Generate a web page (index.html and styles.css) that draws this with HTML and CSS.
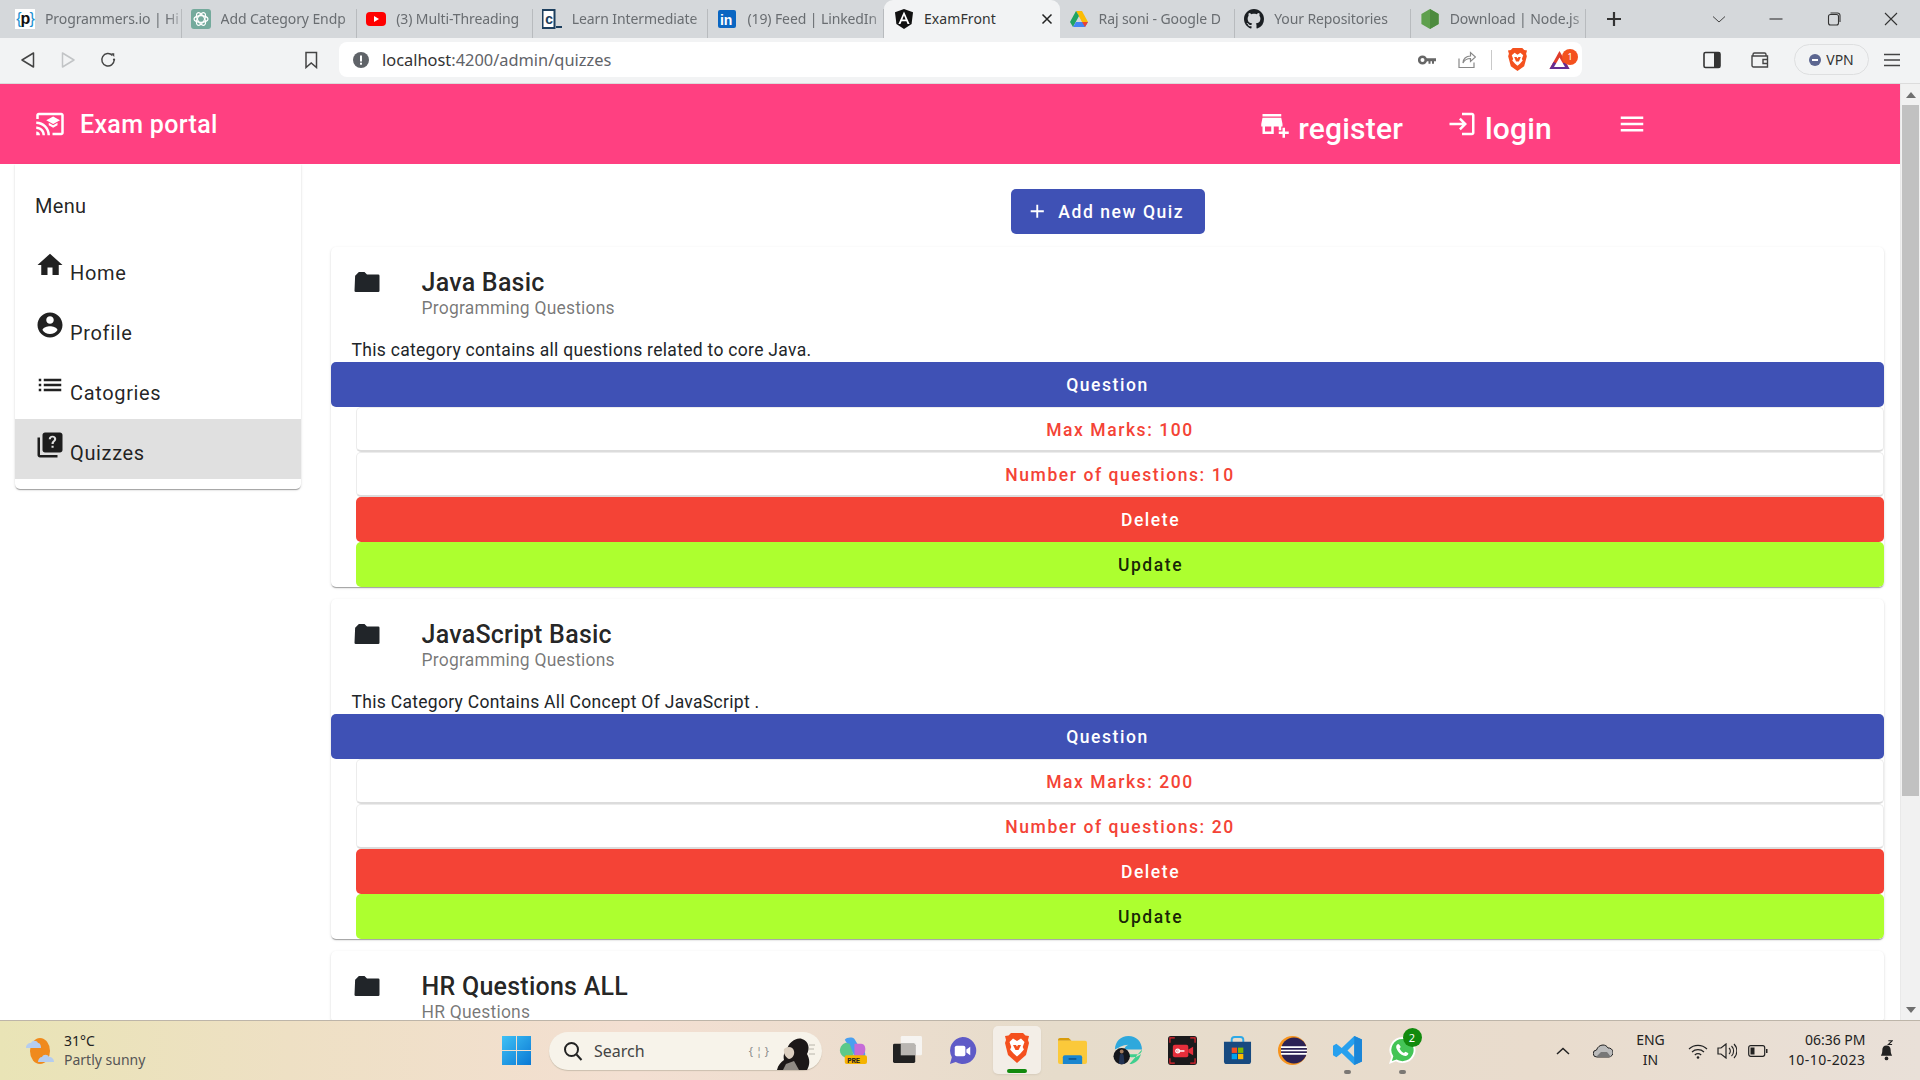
FILE: index.html
```html
<!DOCTYPE html>
<html lang="en">
<head>
<meta charset="utf-8">
<title>ExamFront</title>
<link rel="stylesheet" href="styles.css">
</head>
<body>
<div class="screen">
  <div class="tabstrip">
    <div class="tab"><span class="fav fav-p">{<b>p</b>}</span><span class="tab-title">Programmers.io | Hi</span></div>
    <div class="tab"><svg class="fav" viewBox="0 0 20 20"><rect width="20" height="20" rx="3" fill="#74aa9c"/><g fill="none" stroke="#fff" stroke-width="1.2"><ellipse cx="10" cy="10" rx="7" ry="3.4"/><ellipse cx="10" cy="10" rx="7" ry="3.4" transform="rotate(60 10 10)"/><ellipse cx="10" cy="10" rx="7" ry="3.4" transform="rotate(120 10 10)"/></g></svg><span class="tab-title">Add Category Endp</span></div>
    <div class="tab"><svg class="fav" viewBox="0 0 20 20"><rect y="3" width="20" height="14" rx="4" fill="#f00"/><path d="M8 7l5 3-5 3z" fill="#fff"/></svg><span class="tab-title">(3) Multi-Threading</span></div>
    <div class="tab"><svg class="fav" viewBox="0 0 20 20"><rect x="0.5" y="1" width="12" height="18" fill="#fff" stroke="#1d3f5e" stroke-width="2"/><text x="3" y="15" class="fav-c">c</text><rect x="14" y="17" width="6" height="2" fill="#1d3f5e"/></svg><span class="tab-title">Learn Intermediate</span></div>
    <div class="tab"><svg class="fav" viewBox="0 0 20 20"><rect width="18" height="18" y="1" x="1" rx="2" fill="#0a66c2"/><text x="3" y="15.5" class="fav-in">in</text></svg><span class="tab-title">(19) Feed | LinkedIn</span></div>
    <div class="tab tab-active"><svg class="fav" viewBox="0 0 20 20"><path d="M10 0L1 3.2l1.4 11.9L10 20l7.6-4.9L19 3.2z" fill="#111"/><path d="M10 2.5L4.4 15h2.1l1.1-2.8h4.8l1.1 2.8h2.1zm-1.6 8L10 6.6l1.6 3.9z" fill="#fff"/></svg><span class="tab-title">ExamFront</span><svg class="tab-close" viewBox="0 0 12 12"><path d="M1.5 1.5l9 9m0-9l-9 9" stroke="#222" stroke-width="1.5"/></svg></div>
    <div class="tab"><svg class="fav" viewBox="0 0 20 20"><path d="M7 2h6l6 11h-6z" fill="#fbbc04"/><path d="M7 2L1 13l3 5 6-11z" fill="#1fa463"/><path d="M4 18h12l3-5H7z" fill="#4285f4"/><path d="M13 13h6l-3 5z" fill="#ea4335"/></svg><span class="tab-title">Raj soni - Google D</span></div>
    <div class="tab"><svg class="fav" viewBox="0 0 16 16"><path fill="#1b1f23" d="M8 0C3.58 0 0 3.58 0 8c0 3.54 2.29 6.53 5.47 7.59.4.07.55-.17.55-.38 0-.19-.01-.82-.01-1.49-2.01.37-2.53-.49-2.69-.94-.09-.23-.48-.94-.82-1.13-.28-.15-.68-.52-.01-.53.63-.01 1.08.58 1.23.82.72 1.21 1.87.87 2.33.66.07-.52.28-.87.51-1.07-1.78-.2-3.64-.89-3.64-3.95 0-.87.31-1.59.82-2.15-.08-.2-.36-1.02.08-2.12 0 0 .67-.21 2.2.82.64-.18 1.32-.27 2-.27s1.36.09 2 .27c1.53-1.04 2.2-.82 2.2-.82.44 1.1.16 1.92.08 2.12.51.56.82 1.27.82 2.15 0 3.07-1.87 3.75-3.65 3.95.29.25.54.73.54 1.48 0 1.07-.01 1.93-.01 2.2 0 .21.15.46.55.38A8.01 8.01 0 0016 8c0-4.42-3.58-8-8-8z"/></svg><span class="tab-title">Your Repositories</span></div>
    <div class="tab tab-last"><svg class="fav" viewBox="0 0 20 20"><path d="M10 0l8.6 5v10L10 20l-8.6-5V5z" fill="#5fa04e"/><path d="M10 0l8.6 5v10L10 20z" fill="#4d8b3f"/></svg><span class="tab-title">Download | Node.js</span></div>
    <div class="strip-new"><svg class="ico-16" viewBox="0 0 16 16"><path d="M8 1v14M1 8h14" stroke="#333" stroke-width="2.2"/></svg></div>
    <div class="wincontrols">
      <svg class="win-btn" viewBox="0 0 14 14"><path d="M1 4.5l6 5.5 6-5.5" fill="none" stroke="#444" stroke-width="1"/></svg>
      <svg class="win-btn" viewBox="0 0 14 14"><path d="M0.5 7h13" stroke="#333" stroke-width="1.1"/></svg>
      <svg class="win-btn" viewBox="0 0 14 14"><rect x="1.5" y="2.5" width="10" height="10.5" rx="2" fill="none" stroke="#333" stroke-width="1.1"/><path d="M3.5 1h7a2.5 2.5 0 0 1 2.5 2.5V10" fill="none" stroke="#333" stroke-width="1.1"/></svg>
      <svg class="win-btn" viewBox="0 0 14 14"><path d="M1 1l12 12m0-12L1 13" stroke="#333" stroke-width="1.1"/></svg>
    </div>
  </div>

  <div class="toolbar">
    <div class="nav-group">
      <svg class="tool" viewBox="0 0 16 18"><path d="M13.5 2v14L2 9z" fill="none" stroke="#444" stroke-width="1.5" stroke-linejoin="round"/></svg>
      <svg class="tool" viewBox="0 0 16 18"><path d="M2.5 2v14L14 9z" fill="none" stroke="#c2c4c6" stroke-width="1.5" stroke-linejoin="round"/></svg>
      <svg class="tool" viewBox="0 0 18 18"><path d="M14 3.800A7 7 0 1 0 16 9" fill="none" stroke="#444" stroke-width="1.6"/><path d="M12.500 1.500l3.500 0 0 4z" fill="#444"/><circle cx="15.800" cy="8.500" r="1.300" fill="#444"/></svg>
    </div>
    <svg class="tool tool-mark" viewBox="0 0 14 18"><path d="M2 1.5h10.5v15L7.2 12 2 16.5z" fill="none" stroke="#444" stroke-width="1.5"/></svg>
    <div class="urlbar">
      <svg class="url-info" viewBox="0 0 16 16"><circle cx="8" cy="8" r="8" fill="#5f6368"/><rect x="7" y="3.5" width="2" height="6" fill="#fff"/><rect x="7" y="10.7" width="2" height="2" fill="#fff"/></svg>
      <span class="url-text"><span class="url-host">localhost</span>:4200/admin/quizzes</span>
      <div class="url-actions">
        <svg class="url-key" viewBox="0 0 18 10"><circle cx="4.5" cy="5" r="3.3" fill="none" stroke="#666" stroke-width="2.6"/><path d="M8 3.200h10v3h-2v2.500h-2V6.200h-1.500v2.500h-2V6.200H8z" fill="#666"/></svg>
        <svg class="url-share" viewBox="0 0 18 18"><path d="M1 7.5v9h15v-5M5 12c0-4 3-7 7.5-7V1.5L17.500 6l-5 4.500V7.500C9 7.500 6.500 9 5 12z" fill="none" stroke="#888" stroke-width="1.2"/></svg>
        <span class="url-sep"></span>
        <svg class="url-brave" viewBox="0 0 22 24"><path d="M6 0h10l2 2 3 .5-1 3.500.8 2.500L18 19l-7 5-7-5L1.200 8.500 2 6 1 2.500 4 2z" fill="#f4511e"/><path d="M11 7l-3-2-3 2.500 1.500 4-1 1.500 3 3.500 2.500 2 2.500-2 3-3.500-1-1.500 1.500-4L14 5z" fill="#fff"/><path d="M7.500 9.500h2.500l1 1.500 1-1.500h2.500L12.500 14h-3z" fill="#f4511e"/></svg>
        <span class="bat-wrap"><svg class="url-bat" viewBox="0 0 22 20"><path d="M11 1L1 19h20z" fill="#e03c2a"/><path d="M1 19l4-7 6 3 6-3 4 7z" fill="#662d91"/><path d="M11 7.500l-5.500 9.500h11z" fill="#fff"/></svg><span class="bat-badge">1</span></span>
      </div>
    </div>
    <div class="tool-right">
      <svg class="tool tool-side" viewBox="0 0 18 18"><rect x="1" y="1.500" width="16" height="15" rx="1.500" fill="none" stroke="#333" stroke-width="1.600"/><rect x="11" y="1.500" width="6" height="15" fill="#333"/></svg>
      <svg class="tool tool-wallet" viewBox="0 0 18 18"><path d="M2 5V3.500A1.500 1.500 0 0 1 3.500 2h10A1.500 1.500 0 0 1 15 3.500V5M1 5h15.500v11H2.500A1.500 1.500 0 0 1 1 14.500zM17 8.500h-5v4h5" fill="none" stroke="#444" stroke-width="1.400"/></svg>
      <div class="vpn"><span class="vpn-dot"></span>VPN</div>
      <svg class="tool tool-burger" viewBox="0 0 18 14"><path d="M1 1.500h16M1 7h16M1 12.500h16" stroke="#444" stroke-width="1.400"/></svg>
    </div>
  </div>

  <div class="viewport">
    <div class="page">
      <header class="appbar">
        <svg class="mi mi-logo" viewBox="0 0 24 24"><path d="M21 3H3c-1.100 0-2 .9-2 2v3h2V5h18v14h-7v2h7c1.100 0 2-.9 2-2V5c0-1.100-.9-2-2-2zM1 18v3h3c0-1.660-1.340-3-3-3zm0-4v2c2.760 0 5 2.240 5 5h2c0-3.870-3.130-7-7-7zm0-4v2c4.970 0 9 4.030 9 9h2c0-6.080-4.930-11-11-11zm10 1.090v2L14.500 15l3.500-1.910v-2L14.500 13 11 11.090zM14.500 6L9 9l5.500 3L20 9l-5.500-3z"/></svg>
        <span class="brand">Exam portal</span>
        <nav class="appnav">
          <a class="appnav-link appnav-register"><svg class="mi" viewBox="0 0 24 24"><path d="M15 17h2v-3h1v-2l-1-5H2l-1 5v2h1v6h9v-6h4v3zm-6 1H4v-4h5v4zM2 4h15v2H2zM20 18v-3h-2v3h-3v2h3v3h2v-3h3v-2z"/></svg><span>register</span></a>
          <a class="appnav-link appnav-login"><svg class="mi" viewBox="0 0 24 24"><path d="M11 7L9.600 8.400l2.600 2.600H2v2h10.200l-2.600 2.600L11 17l5-5-5-5zm9 12h-8v2h8c1.100 0 2-.9 2-2V5c0-1.100-.9-2-2-2h-8v2h8v14z"/></svg><span>login</span></a>
          <svg class="mi" viewBox="0 0 24 24"><path d="M3 18h18v-2H3v2zm0-5h18v-2H3v2zm0-7v2h18V6H3z"/></svg>
        </nav>
      </header>
      <div class="layout">
        <aside class="sidebar">
          <div class="side-head">Menu</div>
          <a class="side-item"><svg class="mi" viewBox="0 0 24 24"><path d="M10 20v-6h4v6h5v-8h3L12 3 2 12h3v8z"/></svg><span>Home</span></a>
          <a class="side-item"><svg class="mi" viewBox="0 0 24 24"><path d="M12 2C6.480 2 2 6.480 2 12s4.480 10 10 10 10-4.480 10-10S17.520 2 12 2zm0 3c1.660 0 3 1.340 3 3s-1.340 3-3 3-3-1.340-3-3 1.340-3 3-3zm0 14.200c-2.500 0-4.710-1.280-6-3.220.03-1.990 4-3.080 6-3.080 1.990 0 5.970 1.090 6 3.080-1.290 1.940-3.500 3.220-6 3.220z"/></svg><span>Profile</span></a>
          <a class="side-item"><svg class="mi" viewBox="0 0 24 24"><path d="M3 13h2v-2H3v2zm0 4h2v-2H3v2zm0-8h2V7H3v2zm4 4h14v-2H7v2zm0 4h14v-2H7v2zM7 7v2h14V7H7z"/></svg><span>Catogries</span></a>
          <a class="side-item side-active"><svg class="mi" viewBox="0 0 24 24"><path d="M4 6H2v14c0 1.100.9 2 2 2h14v-2H4V6zm16-4H8c-1.100 0-2 .9-2 2v12c0 1.100.9 2 2 2h12c1.100 0 2-.9 2-2V4c0-1.100-.9-2-2-2z"/><path d="M13.200 12.500h1.700v1.700h-1.700zM14 4.500c-1.800 0-3 1.100-3 2.800h1.700c0-.8.500-1.300 1.300-1.300s1.300.5 1.300 1.200c0 1.400-2.100 1.500-2.100 3.900h1.700c0-1.800 2.100-2.100 2.100-3.900 0-1.600-1.200-2.700-3-2.700z" fill="#e0e0e0"/></svg><span>Quizzes</span></a>
        </aside>
        <main class="content">
          <div class="add-row"><button class="btn btn-primary btn-add"><svg class="mi-add" viewBox="0 0 24 24"><path d="M19 13h-6v6h-2v-6H5v-2h6V5h2v6h6v2z"/></svg>Add new Quiz</button></div>

          <article class="card">
            <div class="card-head">
              <svg class="mi folder" viewBox="0 0 24 24"><path d="M10 4H5.500L2.500 7 2 19a1 1 0 0 0 1 1h18a1 1 0 0 0 1-1V7a1 1 0 0 0-1-1h-9z"/></svg>
              <div><div class="card-title">Java Basic</div><div class="card-sub">Programming Questions</div></div>
            </div>
            <p class="card-desc">This category contains all questions related to core Java.</p>
            <button class="btn btn-primary">Question</button>
            <div class="indent">
              <button class="btn btn-stroked">Max Marks: 100</button>
              <button class="btn btn-stroked">Number of questions: 10</button>
              <button class="btn btn-warn">Delete</button>
              <button class="btn btn-lime">Update</button>
            </div>
          </article>

          <article class="card">
            <div class="card-head">
              <svg class="mi folder" viewBox="0 0 24 24"><path d="M10 4H5.500L2.500 7 2 19a1 1 0 0 0 1 1h18a1 1 0 0 0 1-1V7a1 1 0 0 0-1-1h-9z"/></svg>
              <div><div class="card-title">JavaScript Basic</div><div class="card-sub">Programming Questions</div></div>
            </div>
            <p class="card-desc">This Category Contains All Concept Of JavaScript .</p>
            <button class="btn btn-primary">Question</button>
            <div class="indent">
              <button class="btn btn-stroked">Max Marks: 200</button>
              <button class="btn btn-stroked">Number of questions: 20</button>
              <button class="btn btn-warn">Delete</button>
              <button class="btn btn-lime">Update</button>
            </div>
          </article>

          <article class="card">
            <div class="card-head">
              <svg class="mi folder" viewBox="0 0 24 24"><path d="M10 4H5.500L2.500 7 2 19a1 1 0 0 0 1 1h18a1 1 0 0 0 1-1V7a1 1 0 0 0-1-1h-9z"/></svg>
              <div><div class="card-title">HR Questions ALL</div><div class="card-sub">HR Questions</div></div>
            </div>
          </article>
        </main>
      </div>
    </div>
    <div class="scrollbar">
      <div class="sb-arrow"><svg class="sb-tri" viewBox="0 0 10 6"><path d="M5 0l5 6H0z"/></svg></div>
      <div class="sb-thumb"></div>
      <div class="sb-arrow sb-bottom"><svg class="sb-tri" viewBox="0 0 10 6"><path d="M5 6L0 0h10z"/></svg></div>
    </div>
  </div>

  <footer class="taskbar">
    <div class="weather">
      <svg class="weather-ico" viewBox="0 0 30 30"><ellipse cx="15" cy="15" rx="10" ry="13" fill="#f08a1c"/><path d="M1 12c0-3 2-5 5-5 1-3 6-3 7 0 2 0 3 2 3 5z" fill="#b5cdef"/><path d="M13 26c0-3 2-5 4-5 1-3 6-3 7 0 3 0 5 2 5 5z" fill="#b5cdef"/></svg>
      <div class="weather-text"><div class="weather-temp">31°C</div><div class="weather-desc">Partly sunny</div></div>
    </div>
    <svg class="start" viewBox="0 0 29 29"><defs><linearGradient id="win" x1="0" y1="0" x2="1" y2="1"><stop offset="0" stop-color="#3fc1f5"/><stop offset="1" stop-color="#0a78d4"/></linearGradient></defs><path d="M0 0h14v14H0zM15 0h14v14H15zM0 15h14v14H0zM15 15h14v14H15z" fill="url(#win)"/></svg>
    <div class="search">
      <svg class="search-ico" viewBox="0 0 20 20"><circle cx="8.500" cy="8.500" r="6.500" fill="none" stroke="#222" stroke-width="2"/><path d="M13.500 13.500l5 5.500" stroke="#222" stroke-width="2"/></svg>
      <span class="search-label">Search</span>
      <span class="search-code">{ ¦ }</span>
      <svg class="search-art" viewBox="0 0 46 34"><path d="M6 34c1-5 4-8 7-10-1-4 0-8 3-10 1-7 9-13 15-11 7 2 8 10 5 15 3 5 3 11 0 16z" fill="#1c1818"/><path d="M13 13c3-3 9-3 10 2 1 4-2 8-5 8-3-1-6-6-5-10z" fill="#dccfc0"/><path d="M15 28l8-3 5 9H12z" fill="#8f8a84"/><path d="M38 9h6M38 13h5M38 18h6" stroke="#a8a49c" stroke-width=".8"/></svg>
    </div>
    <div class="apps">
      <div class="app"><svg class="app-ico" viewBox="0 0 30 30"><path d="M7 4c2-3 8-3 10-1l6 10c3 0 6 3 5 8l-10 1z" fill="#4a9ff0"/><path d="M2 15c0-4 3-7 6-8l4 1 5 14H7c-3-1-5-4-5-7z" fill="#5cc98a"/><path d="M17 8h7c3 0 5 3 4 8l-2 4-9 2z" fill="#c66bd8"/><rect x="7" y="20" width="23" height="9" rx="2" fill="#f5b300"/><text x="9.500" y="27.500" class="app-pre">PRE</text></svg></div>
      <div class="app"><svg class="app-ico" viewBox="0 0 30 30"><rect x="8" y="0" width="22" height="20" rx="1.500" fill="#f6f4f1"/><rect x="0" y="8" width="23" height="20" rx="1.500" fill="#222"/><rect x="8" y="8" width="15" height="12" fill="#b9b6b2"/></svg></div>
      <div class="app"><svg class="app-ico" viewBox="0 0 30 30"><path d="M15 1a14 14 0 1 1-7 26l-6 2 2-7A14 14 0 0 1 15 1z" fill="#5f5bc7"/><rect x="7" y="10" width="11" height="11" rx="2" fill="#fff"/><path d="M19 14l4-3v9l-4-3z" fill="#fff"/></svg></div>
      <div class="app app-current"><svg class="app-brave" viewBox="0 0 26 30"><path d="M7 0h12l2.500 2.500 3.500.5-1 4 1 3-3 12-9 8-9-8L1 10l1-3-1-4 3.500-.5z" fill="#f4501e"/><path d="M13 8L9 5.500 5.500 9l1.800 5-1.200 2.500 3.500 4 3.400 3 3.400-3 3.500-4-1.200-2.500L20.500 9 17 5.500z" fill="#fff"/><path d="M9 12h3l1 1.800 1-1.800h3l-2.500 5h-3z" fill="#f4501e"/></svg><span class="app-run"></span></div>
      <div class="app"><svg class="app-ico" viewBox="0 0 30 28"><path d="M0 3a2 2 0 0 1 2-2h9l3 3h-14z" fill="#d99c0a"/><path d="M0 4h28a2 2 0 0 1 2 2v20a2 2 0 0 1-2 2H2a2 2 0 0 1-2-2z" fill="#fbc93a"/><path d="M5 21a2 2 0 0 1 2-2h16a2 2 0 0 1 2 2v7H5z" fill="#1a86cf"/><rect x="11" y="22" width="8" height="1.500" fill="#0b4f86"/></svg></div>
      <div class="app"><svg class="app-ico" viewBox="0 0 30 30"><path d="M2 14C2 6 8 0 16 0c8 0 14 6 14 14H12c0-2 1-4 4-5-6 0-12 4-14 5z" fill="#2fa8dc"/><path d="M30 14c0 3-2 5-5 5H14c1 2 3 3 5 3 5 0 9-2 10-4-1 6-6 11-12 11" fill="#3fcf8e"/><circle cx="9" cy="21" r="8.500" fill="#15171c"/><path d="M6 29l1-9c0-2 4-2 4 0l1 9z" fill="#233454"/><circle cx="9" cy="16" r="2" fill="#a37b5e"/></svg></div>
      <div class="app"><svg class="app-ico" viewBox="0 0 30 30"><rect width="30" height="30" rx="3" fill="#1a1a1c"/><path d="M2 7V2h5M23 2h5v5M28 23v5h-5M7 28H2v-5" fill="none" stroke="#e8262f" stroke-width="1.200"/><rect x="5" y="9" width="16" height="13" rx="2" fill="#e52e3b"/><path d="M21 14l5-3v9l-5-3z" fill="#e52e3b"/><path d="M9 15.500h8" stroke="#fff" stroke-width="1.500"/><circle cx="10" cy="15.500" r="2" fill="none" stroke="#fff" stroke-width="1.200"/></svg></div>
      <div class="app"><svg class="app-ico" viewBox="0 0 30 30"><path d="M9 7V4a3 3 0 0 1 3-3h6a3 3 0 0 1 3 3v3" fill="none" stroke="#2ea9e6" stroke-width="2"/><path d="M1 6h28v20a3 3 0 0 1-3 3H4a3 3 0 0 1-3-3z" fill="#174a80"/><rect x="9" y="12" width="5.500" height="5.500" fill="#f25022"/><rect x="15.500" y="12" width="5.500" height="5.500" fill="#7fba00"/><rect x="9" y="18.500" width="5.500" height="5.500" fill="#00a4ef"/><rect x="15.500" y="18.500" width="5.500" height="5.500" fill="#ffb900"/></svg></div>
      <div class="app"><svg class="app-ico" viewBox="0 0 30 30"><circle cx="15" cy="15" r="15" fill="#f7941e"/><circle cx="16.500" cy="15" r="13.500" fill="#2c2255"/><path d="M3 11.500h27M3 15h27M3 18.500h27" stroke="#fff" stroke-width="1.600"/></svg></div>
      <div class="app app-open"><svg class="app-ico" viewBox="0 0 30 30"><path d="M22 0l8 3.500v23L22 30 9 17.500 3.500 22 0 20V10l3.500-2L9 12.500zM22 8l-7 7 7 7z" fill="#27a0ee"/><path d="M22 0l8 3.500v23L22 30V22l0-14z" fill="#1b86d8"/></svg><span class="app-dot"></span></div>
      <div class="app app-open"><span class="wa"><svg class="app-ico" viewBox="0 0 30 30"><path d="M15 1a13.500 13.500 0 1 1-6.800 25.200L1 29l2.500-7.500A13.500 13.500 0 0 1 15 1z" fill="#fff"/><path d="M15 3a11.500 11.500 0 1 1-6 21.300l-5 1.500 1.500-4.800A11.500 11.500 0 0 1 15 3z" fill="#44c456"/><path d="M10 8.500c-1.500 1-2 2.500-1 5 1.500 3.500 4 6 7.500 7 2 .5 3.500-.3 4.500-2 .3-.7-.2-1-3-2.300l-1.500 1.300c-2-.7-3.500-2.300-4.500-4.500l1.200-1.500C12 9.500 11 8 10 8.500z" fill="#fff"/></svg><span class="wa-badge">2</span></span><span class="app-dot"></span></div>
    </div>
    <div class="tray">
      <svg class="tray-chev" viewBox="0 0 14 8"><path d="M1 7l6-5.500L13 7" fill="none" stroke="#222" stroke-width="1.500"/></svg>
      <svg class="tray-cloud" viewBox="0 0 20 14"><path d="M4 13a3.500 3.500 0 0 1-.5-7C4.500 3 7 1 10 1c2 0 4 1 5 3a4.500 4.500 0 0 1 1 9z" fill="#bbb" stroke="#222"/><path d="M3 13l5-5h6l4 5z" fill="#777"/></svg>
      <div class="tray-lang"><div>ENG</div><div>IN</div></div>
      <svg class="tray-wifi" viewBox="0 0 20 16"><path d="M1 6a13 13 0 0 1 18 0M4 9a9 9 0 0 1 12 0M6.800 12a5 5 0 0 1 6.400 0" fill="none" stroke="#222" stroke-width="1.200"/><circle cx="10" cy="14.500" r="1.300" fill="#222"/></svg>
      <svg class="tray-vol" viewBox="0 0 20 16"><path d="M1 5h3l5-4v14l-5-4H1z" fill="none" stroke="#222" stroke-width="1.200"/><path d="M12 5a4 4 0 0 1 0 6M14.500 3a7 7 0 0 1 0 10M17 1a10 10 0 0 1 0 14" fill="none" stroke="#222" stroke-width="1.100"/></svg>
      <svg class="tray-bat" viewBox="0 0 20 12"><rect x="0.700" y="0.700" width="16" height="10.600" rx="2" fill="none" stroke="#222" stroke-width="1.200"/><rect x="2.500" y="2.500" width="4" height="7" fill="#222"/><path d="M18 4h1.500v4H18z" fill="#222"/></svg>
      <div class="tray-clock"><div>06:36 PM</div><div class="tray-date">10-10-2023</div></div>
      <svg class="tray-bell" viewBox="0 0 14 24"><path d="M1 17c1-2 1.500-3 1.500-6S4 6 7 6s4.500 2 4.500 5 .5 4 1.500 6z" fill="#222"/><circle cx="7" cy="20" r="2" fill="#222"/><path d="M9 1h4l-4 4h4" fill="none" stroke="#222" stroke-width="1.200"/></svg>
    </div>
  </footer>
</div>
</body>
</html>
```
FILE: styles.css
```css
* { box-sizing: border-box; }
html, body { margin: 0; padding: 0; height: 100%; overflow: hidden; }
body { font-family: Roboto, "Noto Sans", sans-serif; color: #212529; background: #fff; }
.screen { width: 1920px; height: 1080px; display: flex; flex-direction: column; overflow: hidden; }

/* Tab strip */
.tabstrip { height: 38px; background: #d5d8db; display: flex; padding-left: 6px; flex: none; }
.tab { width: 175.6px; height: 38px; display: flex; align-items: center; padding: 0 2px 0 9px; font: 14px "Noto Sans", sans-serif; letter-spacing: -.1px; color: #696d71; position: relative; }
.tab::after { content: ""; position: absolute; right: 0; top: 9px; bottom: 0; width: 1px; background: #b8bbbe; }
.tab-active { background: #f2f3f4; color: #333; border-radius: 9px 9px 0 0; padding-left: 10px; }
.tab-active::after { display: none; }
.fav { width: 20px; height: 20px; flex: none; margin-right: 10px; margin-top: -1px; }
.fav-p { background: #fff; font: 16px/20px "Liberation Sans", sans-serif; color: #1a8fd1; text-align: center; letter-spacing: -1px; }
.fav-p b { color: #111; }
.fav-c { font: 700 14px "Liberation Mono", monospace; fill: #1d3f5e; }
.fav-in { font: 700 14px "Liberation Sans", sans-serif; fill: #fff; }
.tab-title { flex: 1; min-width: 0; overflow: hidden; white-space: nowrap; margin-top: -1px; -webkit-mask-image: linear-gradient(to right, #000 90%, rgba(0,0,0,.35)); mask-image: linear-gradient(to right, #000 90%, rgba(0,0,0,.35)); }
.tab-active .tab-title { -webkit-mask-image: none; mask-image: none; letter-spacing: .1px; }
.tab-close { width: 12px; height: 12px; flex: none; margin-right: 5px; }
.strip-new { width: 16px; height: 38px; display: flex; align-items: center; margin-left: 20px; }
.ico-16 { width: 16px; height: 16px; display: block; }
.wincontrols { margin-left: auto; display: flex; align-items: center; height: 38px; padding-right: 22px; gap: 43.500px; }
.win-btn { width: 14px; height: 14px; flex: none; }

/* Toolbar */
.toolbar { height: 46px; background: #f2f3f4; border-bottom: 1px solid #dcdcdc; display: flex; align-items: center; padding: 0 19px 2px 20px; flex: none; }
.nav-group { display: flex; align-items: center; gap: 24px; }
.tool { width: 16px; height: 18px; display: block; flex: none; }
.tool-mark { width: 14px; margin-left: 188px; margin-right: 21px; }
.urlbar { width: 1243px; height: 35px; background: #fff; border-radius: 8px; display: flex; align-items: center; padding-left: 14px; }
.url-info { width: 16px; height: 16px; flex: none; margin-right: 13px; }
.url-text { font: 16.400px "Noto Sans", sans-serif; color: #5f6368; white-space: nowrap; }
.url-host { color: #333; }
.url-actions { margin-left: auto; display: flex; align-items: center; }
.url-key { width: 18px; height: 10px; }
.url-share { width: 18px; height: 18px; margin-left: 22px; }
.url-sep { width: 1px; height: 20px; background: #c9c9c9; margin-left: 15px; }
.url-brave { width: 21px; height: 23px; margin-left: 15px; }
.bat-wrap { width: 34px; height: 26px; margin-left: 20px; position: relative; display: block; }
.url-bat { width: 23px; height: 20px; position: absolute; left: 0; bottom: 3px; }
.bat-badge { position: absolute; left: 14px; top: 2px; width: 16px; height: 16px; border-radius: 50%; background: #f4511e; color: #fff; font: 9px/16px "Noto Sans", sans-serif; text-align: center; }
.tool-right { display: flex; align-items: center; margin-left: auto; }
.tool-side { width: 18px; }
.tool-wallet { width: 18px; margin-left: 30px; }
.vpn { width: 75px; height: 31px; border: 1px solid #dedfe0; border-radius: 16px; margin-left: 25px; display: flex; align-items: center; justify-content: center; gap: 5px; font: 14px "Noto Sans", sans-serif; color: #333; }
.vpn-dot { width: 12px; height: 12px; border-radius: 50%; background: #5c6690; position: relative; }
.vpn-dot::after { content: ""; position: absolute; left: 3px; right: 3px; top: 5px; height: 2px; background: #fff; }
.tool-burger { width: 18px; height: 14px; margin-left: 14px; }

/* Viewport */
.viewport { flex: 1; min-height: 0; display: flex; }
.page { width: 1900px; overflow: hidden; display: flex; flex-direction: column; }
.mi { width: 30px; height: 30px; flex: none; display: block; fill: currentColor; }
.appbar { height: 80px; flex: none; background: #ff4081; color: #fff; display: flex; align-items: center; padding: 0 253px 0 35px; }
.mi-logo { margin-right: 15px; }
.brand { font-size: 25px; font-weight: 500; white-space: nowrap; letter-spacing: .33px; }
.appnav { margin-left: auto; display: flex; align-items: center; }
.appnav-link { display: flex; align-items: center; font-size: 30px; font-weight: 500; letter-spacing: .2px; }
.appnav-link span { margin-top: 9px; }
.appnav-register { gap: 8px; margin-right: 44px; }
.appnav-login { gap: 8px; margin-right: 65px; }

.layout { flex: 1; min-height: 0; display: flex; align-items: flex-start; }
.sidebar { width: 286px; margin-left: 15px; flex: none; background: #fff; border-radius: 0 0 5px 5px; box-shadow: 0 2px 1px -1px rgba(0,0,0,.2), 0 1px 1px 0 rgba(0,0,0,.14), 0 1px 3px 0 rgba(0,0,0,.12); padding-bottom: 10px; }
.side-head { height: 75px; padding: 30px 0 0 20px; font-size: 20px; line-height: 24px; color: #000000de; letter-spacing: .3px; }
.side-item { height: 60px; display: flex; align-items: flex-start; padding: 11px 0 0 19.500px; font-size: 20px; line-height: 24px; color: #000000de; }
.side-item span { margin: 11px 0 0 5.500px; letter-spacing: .65px; }
.side-active { background: #e0e0e0; }

.content { flex: 1; min-width: 0; padding: 25px 16px 0 30px; }
.add-row { display: flex; justify-content: center; margin-bottom: 13px; }
.btn { display: block; width: 100%; height: 45px; border: 0; border-radius: 5px; font: 500 17.500px Roboto, sans-serif; letter-spacing: 1.560px; padding: 0; }
.btn-primary { background: #3f51b5; color: #fff; }
.btn-add { width: 194px; display: flex; align-items: center; justify-content: center; padding-right: 5px; }
.mi-add { width: 22.500px; height: 22.500px; fill: #fff; margin-right: 10px; }
.btn-stroked { background: #fff; color: #f44336; border: 1px solid #ececec; border-bottom: 2px solid #dcdcdc; padding-top: 2px; }
.btn-warn { background: #f44336; color: #fff; padding-left: 61px; }
.btn-lime { background: #adff2f; color: #000000de; padding-left: 61px; }

.card { background: #fff; border-radius: 5px; box-shadow: 0 2px 1px -1px rgba(0,0,0,.2), 0 1px 1px 0 rgba(0,0,0,.14), 0 1px 3px 0 rgba(0,0,0,.12); margin-bottom: 12px; overflow: hidden; }
.card-head { display: flex; padding: 20px 20px 0 20.500px; }
.folder { margin-right: 40px; color: #212529; }
.card-title { font-size: 25px; font-weight: 500; line-height: 31px; color: #000000de; letter-spacing: .25px; }
.card-sub { font-size: 17.500px; line-height: 21px; color: #0000008a; letter-spacing: .2px; }
.card-desc { margin: 19px 0 0 20.500px; font-size: 17.500px; line-height: 24px; height: 24px; letter-spacing: .3px; }
.indent { margin-left: 25px; }

/* Scrollbar */
.scrollbar { flex: 1; background: #f1f1f1; display: flex; flex-direction: column; align-items: center; border-left: 1px solid #e9e9e9; }
.sb-arrow { height: 21px; display: flex; align-items: center; justify-content: center; flex: none; }
.sb-tri { width: 10px; height: 6px; fill: #6f6f6f; }
.sb-thumb { width: 17px; height: 691px; background: #c1c1c1; }
.sb-bottom { margin-top: auto; }

/* Taskbar */
.taskbar { height: 60px; flex: none; display: flex; align-items: center; border-top: 1.500px solid #bdb5a9; background: linear-gradient(90deg, #e9e4b6 0%, #eee0c4 15%, #f3dfd2 33%, #e6dccb 55%, #e9dccd 80%, #e9e0d8 100%); font-family: "Noto Sans", sans-serif; color: #222; }
.weather { width: 502px; flex: none; display: flex; align-items: center; padding-left: 25px; }
.weather-ico { width: 30px; height: 30px; flex: none; margin-right: 9px; }
.weather-text { margin-top: -1px; }
.weather-temp { font-size: 14px; line-height: 19.500px; }
.weather-desc { font-size: 14px; line-height: 19.500px; color: #555; }
.start { width: 29px; height: 29px; flex: none; margin-right: 18px; }
.search { width: 273px; height: 38px; flex: none; background: #f7f3ea; border-radius: 19px; box-shadow: 0 1px 1px #cbbfae; display: flex; align-items: center; padding-left: 14px; }
.search-ico { width: 20px; height: 20px; flex: none; margin-right: 11px; }
.search-label { font-size: 16px; color: #444; }
.search-code { margin-left: auto; font-size: 11px; color: #888; }
.search-art { width: 46px; height: 34px; margin: 0 5px 0 2px; flex: none; align-self: flex-end; }
.apps { display: flex; flex: none; margin-left: 2.500px; margin-top: -1px; }
.app { width: 55px; height: 48px; display: flex; align-items: center; justify-content: center; position: relative; flex: none; }
.app-ico { width: 29px; height: 29px; display: block; }
.app-current { background: #f3eee7; border-radius: 5px; box-shadow: 0 1px 2px #d5cbbb; width: 48px; margin: 0 3.500px; }
.app-brave { width: 26px; height: 30px; margin-top: -5px; }
.app-run { position: absolute; left: 14px; bottom: 1px; width: 20px; height: 4px; background: #128a0e; border-radius: 2px; }
.app-dot { position: absolute; left: 24px; bottom: 0; width: 7px; height: 4px; background: #7b7874; border-radius: 2px; }
.app-pre { font: 700 7.500px "Liberation Mono", monospace; fill: #222; }
.wa { position: relative; display: block; }
.wa-badge { position: absolute; left: 15px; top: -8px; width: 19px; height: 19px; border-radius: 50%; background: #128a0e; color: #fff; font-size: 11px; line-height: 19px; text-align: center; }
.tray { flex: 1; display: flex; align-items: center; padding-left: 126px; }
.tray-chev { width: 14px; height: 8px; flex: none; }
.tray-cloud { width: 20px; height: 14px; margin-left: 23px; flex: none; }
.tray-lang { width: 40px; margin-left: 18px; text-align: center; font-size: 14px; line-height: 20px; flex: none; margin-top: -1px; }
.tray-wifi { width: 20px; height: 16px; margin-left: 17px; flex: none; }
.tray-vol { width: 20px; height: 16px; margin-left: 9px; flex: none; }
.tray-bat { width: 20px; height: 12px; margin-left: 11px; flex: none; }
.tray-clock { width: 90px; margin-left: 8px; text-align: right; font-size: 14px; line-height: 20px; flex: none; margin-top: -1px; }
.tray-date { letter-spacing: .45px; }
.tray-bell { width: 13px; height: 24px; margin-left: 14px; flex: none; }
```
